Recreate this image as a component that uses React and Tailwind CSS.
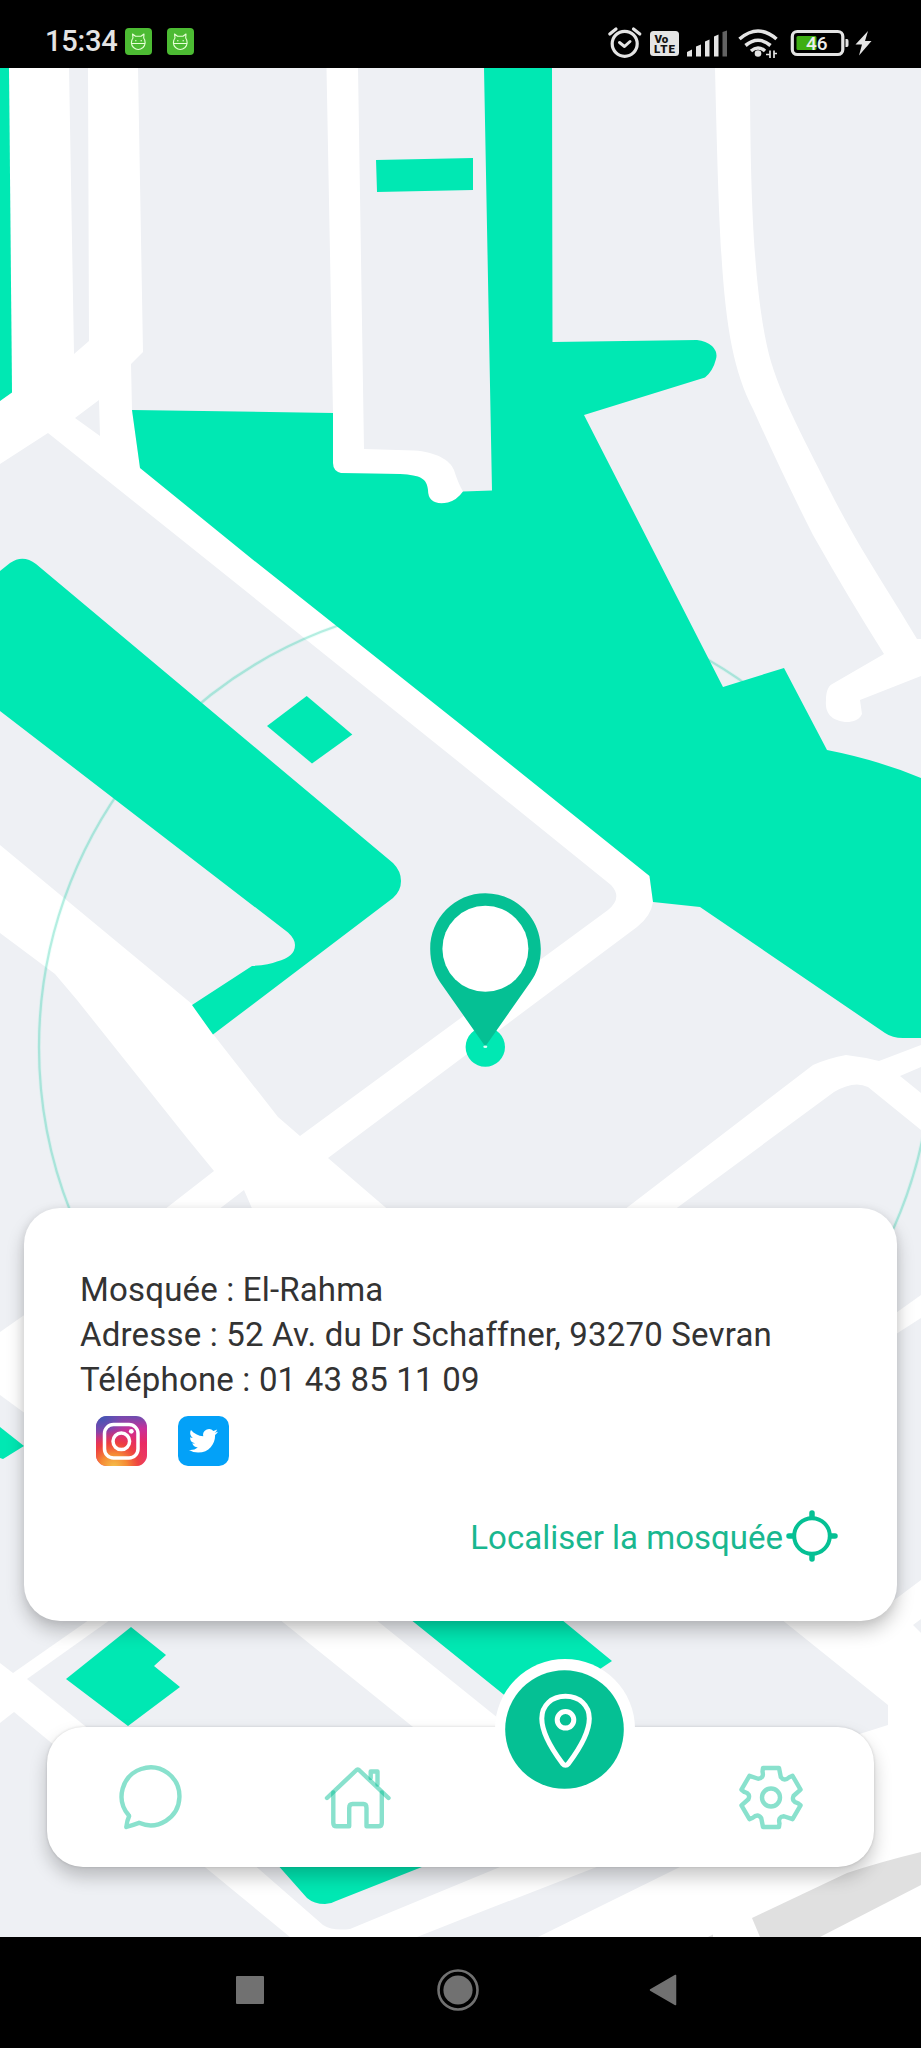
import React from "react";

const GREEN = "#00e8b3";
const DEEP = "#05c094";

function CityMap() {
  return (
    <svg className="absolute inset-0 h-full w-full" viewBox="0 68 921 1869" preserveAspectRatio="none">
      <rect x="0" y="68" width="921" height="1869" fill="#eef0f4" />

      {/* roads */}
      <g fill="#fff">
        <path d="M9 68H69L74 354L89 341L88 68H138L143 352L131 364L132 410L140 468L649 874L653 902Q651 916 637 927L328 1158L392 1213H254L244 1190L214 1213H160L214 1171L187 1138L77 1000L55 974L0 933V845L192 1004L213 1034L278 1117L300 1136L608 910Q623 898 611 885L460 763L182 540L48 433L0 464V401L12 392ZM75 418L100 436L99 400Z" />
        <path d="M326.500 68H358L364 449L414 450.500C436 452 450 460 454 470Q458 483 463 491.500Q457 500 448 502.500Q428 506 428 490C427 479 421 475 400 474L341 473Q333 471 333 463V413Z" />
        <path d="M715 68H750C750 210 755 290 767 346C776 388 801 433 830 491C860 550 885 585 917 639H921V676L860 700L862 714C858 722 850 722 845 722C829 720 825 711 826 700C826 690 829 685 834 683L884 654Q848 597 813 535Q785 480 753 409C723 350 720 280 715 68Z" />
        <path d="M620 1213L813 1065Q829 1058 846 1055Q863 1057 879 1061L921 1045V1067L900 1076L921 1093V1130L868 1087Q854 1080 834 1092L670 1213Z" />
        <path d="M0 1332L30 1311V1417L0 1395Z" />
        <path d="M893 1315L921 1295V1318L893 1336Z" />
        <path d="M0 1663L13 1673L96 1615H117L27 1679L90 1730L60 1750L14 1712L0 1723Z" />
        <path d="M274 1615H370L514 1731H418Z" />
        <path d="M776 1615L888 1705V1725L850 1737L840 1780L680 1867L538 1937H921V1633L913 1625L921 1619V1580L873 1616Z" />
        <path d="M200 1863H252L323 1925Q332 1931 350 1929L500 1867L510 1863H607L460 1920L417 1937H290Z" />
      </g>

      {/* range circle */}
      <circle cx="485.500" cy="1047" r="446.500" fill="none" stroke={DEEP} strokeOpacity=".25" strokeWidth="2.200" />
      <circle cx="485.500" cy="1047" r="446.500" fill="none" stroke={GREEN} strokeOpacity=".06" strokeWidth="4" />

      {/* parks */}
      <g fill={GREEN}>
        <path d="M0 68H9L12 392.500L0 401Z" />
        <path d="M376 160L473 158V190L377 192Z" />
        <path d="M484 68H552L552.500 342L697 340Q706 341 712 346Q718 352 716 359Q713 371 705 377.500L584 415L723 687L784 668L827 750Q878 760 921 778V1038H905Q893 1038.500 885 1033L700 907L653 902L649.500 876L460 724L252 559L140 468L132 410L333 413V463Q333 471 341 473L400 474C421 475 427 479 428 490Q428 506 448 502.500Q457 500 463 491.500L492 490.500Z" />
        <path d="M0 571L10 563Q23 554 36 564L393 863Q401 871 401 881Q401 891 393 898L213 1034.500L192 1005L252 966Q269 965 277 961.500Q295 957 295 945Q295 939 288 932.500L0 711Z" />
        <path d="M306.700 696L352.300 734.600L312 763.500L267 726Z" />
        <path d="M0 1427L24 1446L3 1459L0 1458Z" />
        <path d="M131 1627L166 1655L154 1666L180 1687L128 1726L66 1679Z" />
        <path d="M405 1615H556L612 1661L600 1669L540 1723L503 1694Z" />
        <path d="M276 1863L307 1898Q314 1904 325 1904Q331 1904 336 1901L432 1863Z" />
      </g>
      <path d="M752 1918L847 1873Q880 1862 921 1852V1885L820 1937H760Z" fill="#e0e0e0" />
      <path d="M708 1937L713 1934.500V1937Z" fill="#e0e0e0" />

      {/* position */}
      <circle cx="485.300" cy="1047" r="19.700" fill={GREEN} />
      <path d="M485.300 893.300C455 893.300 430.200 918 430.200 949C430.200 962 434 973 440 982L485.300 1046.500L530.500 982C537 973 540.800 962 540.800 949C540.800 918 516 893.300 485.300 893.300Z" fill={DEEP} />
      <circle cx="485.400" cy="948.800" r="43" fill="#fff" />
      <ellipse cx="485.300" cy="1046.700" rx="2" ry="1.300" fill="#d9fff5" />
    </svg>
  );
}

function Cat() {
  return (
    <svg className="h-[27px] w-[27px]" viewBox="0 0 27 27">
      <rect width="27" height="27" rx="4" fill="#4cbb33" />
      <g fill="none" stroke="#e8ffd8" strokeWidth="1.100" strokeLinejoin="round">
        <path d="M7.500 6L8 10C5.500 13 6 17 8.500 19.500Q13.300 23.500 18 19.500C20.500 17 21 13 18.700 10L19 6L16 8.300H10.500Z" />
        <path d="M6.500 15.500H20M10 12.700H11.500M15.500 12.700H17" />
      </g>
    </svg>
  );
}

function StatusBar() {
  return (
    <header className="flex h-[68px] shrink-0 items-center bg-black pl-[45px] pt-[15px]">
      <span className="w-[80px] text-[29px] font-medium leading-none tracking-[-0.2px] text-[#e4e4e4]">15:34</span>
      <div className="flex gap-[15px]">
        <Cat />
        <Cat />
      </div>
      <svg className="ml-auto mr-[41px] h-[40px] w-[276px]" viewBox="604 21 276 40">
        <g fill="none" stroke="#e4e4e4" strokeLinecap="round">
          <circle cx="624.700" cy="42.800" r="12.500" strokeWidth="3.200" />
          <path d="M619.500 41.500L624.500 45.500L630 40.500" strokeWidth="3" strokeLinejoin="round" />
          <path d="M609.800 33L616 28M639.800 33L633.500 28" strokeWidth="3.200" />
        </g>
        <rect x="650" y="30" width="29" height="25" rx="3.500" fill="#e4e4e4" />
        <text x="654.500" y="41.500" fontSize="11.500" fontWeight="900" fill="#111" fontFamily="Roboto, sans-serif">Vo</text>
        <text x="654" y="52" fontSize="11.500" fontWeight="900" fill="#111" fontFamily="Roboto, sans-serif" textLength="21">LTE</text>
        <g fill="#e4e4e4">
          <path d="M687 55.500V51L692 48.500V55.500ZM696 55.500V45.500L701 43.500V55.500ZM705 55.500V40.500L709.500 38.500V55.500ZM714 55.500V35.500L718.500 33.500V55.500Z" />
          <path d="M722.500 55.500V31L727 29.500V55.500Z" fill="#626262" />
        </g>
        <g fill="none" stroke="#e4e4e4" strokeWidth="3.600">
          <path d="M739.500 38Q758 22 776.500 38" />
          <path d="M745.500 44.500Q758 34 770.500 44.500" />
          <path d="M751 50Q758 44 765 50" />
        </g>
        <circle cx="758" cy="52.500" r="3.300" fill="#e4e4e4" />
        <path d="M766 53.500H770M770 49.500V57M774 49.500V57M774 52.500H777" fill="none" stroke="#e4e4e4" strokeWidth="1.700" />
        <rect x="792.300" y="30.500" width="50.500" height="23" rx="5" fill="none" stroke="#e4e4e4" strokeWidth="3.200" />
        <rect x="796.500" y="35" width="20" height="14" rx="1.500" fill="#3fae14" />
        <path d="M845.500 38H847Q848.500 38 848.500 40V44Q848.500 46 847 46H845.500Z" fill="#e4e4e4" />
        <text x="806" y="49" fontSize="19" fontWeight="500" fill="#eee" fontFamily="Roboto, sans-serif">46</text>
        <path d="M868 30L855.500 43.500H862L859 54.500L871.500 40H865Z" fill="#e4e4e4" />
      </svg>
    </header>
  );
}

function Instagram() {
  return (
    <svg className="h-[51px] w-[51px]" viewBox="0 0 51 51">
      <defs>
        <linearGradient id="igBase" x1="0" y1="0" x2="0" y2="1">
          <stop offset="0" stopColor="#6a4fb0" />
          <stop offset=".25" stopColor="#c8309a" />
          <stop offset=".55" stopColor="#ea2a62" />
          <stop offset="1" stopColor="#f0406a" />
        </linearGradient>
        <radialGradient id="igWarm" cx=".35" cy="1.020" r=".75">
          <stop offset="0" stopColor="#f5c04a" />
          <stop offset=".35" stopColor="#f58a35" />
          <stop offset=".65" stopColor="#ee4438" stopOpacity=".8" />
          <stop offset="1" stopColor="#e0306a" stopOpacity="0" />
        </radialGradient>
        <radialGradient id="igCool" cx=".1" cy="0" r=".6">
          <stop offset="0" stopColor="#3d57b5" />
          <stop offset=".5" stopColor="#6a4db2" stopOpacity=".8" />
          <stop offset="1" stopColor="#a03aa8" stopOpacity="0" />
        </radialGradient>
      </defs>
      <rect width="51" height="50" rx="11" fill="url(#igBase)" />
      <rect width="51" height="50" rx="11" fill="url(#igCool)" />
      <rect width="51" height="50" rx="11" fill="url(#igWarm)" />
      <rect x="8.500" y="8.500" width="33.500" height="33.500" rx="9" fill="none" stroke="#fff" strokeWidth="3.500" />
      <circle cx="25.300" cy="25.300" r="8.300" fill="none" stroke="#fff" strokeWidth="3.500" />
      <circle cx="35.300" cy="15.300" r="2.400" fill="#fff" />
    </svg>
  );
}

function Twitter() {
  return (
    <svg className="h-[51px] w-[51px]" viewBox="0 0 51 51">
      <rect width="51" height="50" rx="10" fill="#03a1f8" />
      <g transform="translate(11 10.300) scale(1.210)">
        <path fill="#fff" d="M23.950 4.570a10 10 0 01-2.820.770 4.960 4.960 0 002.160-2.720c-.950.550-2 .950-3.130 1.180a4.920 4.920 0 00-8.380 4.480C7.690 8.090 4.070 6.130 1.640 3.160a4.820 4.820 0 00-.670 2.480c0 1.710.870 3.210 2.190 4.100a4.900 4.900 0 01-2.230-.610v.060a4.920 4.920 0 003.950 4.830 5 5 0 01-2.210.080 4.940 4.940 0 004.600 3.420A9.870 9.870 0 010 19.540a13.990 13.990 0 007.560 2.210c9.050 0 14-7.500 14-13.980 0-.210 0-.420-.020-.630a9.940 9.940 0 002.460-2.550z" />
      </g>
    </svg>
  );
}

function PlaceCard() {
  return (
    <section className="mx-[24px] mt-[1140px] flex h-[413px] shrink-0 flex-col rounded-[36px] bg-white pl-[56px] pr-[59px] pt-[59px] shadow-[0_10px_18px_rgba(0,0,0,0.22),0_1px_8px_rgba(0,0,0,0.08)]">
      <div className="text-[33px] leading-[45.200px] tracking-[0.180px] text-[#333]">
        <p className="whitespace-nowrap">Mosquée : El-Rahma</p>
        <p className="whitespace-nowrap">Adresse : 52 Av. du Dr Schaffner, 93270 Sevran</p>
        <p className="whitespace-nowrap">Téléphone : 01 43 85 11 09</p>
      </div>
      <div className="mt-[13px] flex gap-[31px] pl-[16px]">
        <Instagram />
        <Twitter />
      </div>
      <button className="mt-[42px] flex items-center self-end text-[33px] leading-[52px] text-[#19b78f]">
        <span className="whitespace-nowrap pt-[3px]">Localiser la mosquée</span>
        <svg className="ml-[3px] h-[52px] w-[52px]" viewBox="-26 -26 52 52" fill="none" stroke={DEEP} strokeLinecap="round">
          <circle r="17.800" strokeWidth="4" />
          <path d="M0-23V-19M0 19V23M-23 0H-19M19 0H23" strokeWidth="5.500" />
        </svg>
      </button>
    </section>
  );
}

function gearPath() {
  const tooth = [[-8, -29.5], [8, -29.5], [9.8, -20.5], [13.3, -15.5], [18.2, -20.3]];
  let d = "";
  for (let i = 0; i < 6; i++) {
    const a = (i * Math.PI) / 3;
    const p = tooth.map(([x, y]) =>
      `${(x * Math.cos(a) - y * Math.sin(a)).toFixed(2)} ${(x * Math.sin(a) + y * Math.cos(a)).toFixed(2)}`
    );
    d += `${i ? "L" : "M"}${p[0]}L${p[1]}L${p[2]}Q${p[3]} ${p[4]}`;
  }
  return d + "Z";
}

const iconProps = { fill: "none", stroke: DEEP, strokeWidth: 4.4, strokeLinecap: "round", strokeLinejoin: "round" };

function NavBar() {
  return (
    <nav className="relative mx-[47px] mt-[106px] grid h-[140px] shrink-0 grid-cols-[208px_206px_206px_207px] items-center rounded-[36px] bg-white shadow-[0_10px_18px_rgba(0,0,0,0.22),0_0_3px_rgba(0,0,0,0.15)]">
      <button className="flex justify-center">
        <svg className="h-[70px] w-[70px]" viewBox="115 1761.500 70 70" {...iconProps} strokeOpacity=".47">
          <path d="M127.500 1814.500A28.900 28.900 0 1 1 138 1822.300Q133 1824 125.300 1826.500Q126 1820 128 1816Q128.300 1815.200 127.500 1814.500Z" />
        </svg>
      </button>
      <button className="flex justify-center">
        <svg className="h-[70px] w-[70px]" viewBox="323.500 1762 70 70" {...iconProps} strokeOpacity=".47">
          <path d="M327.500 1798L356.500 1770.500Q358.300 1768.500 360 1770.500L389 1798" />
          <path d="M333.800 1792.500V1823Q333.800 1826.300 337 1826.300H349.700V1808Q349.700 1804 353 1804H364Q367 1804 367 1808V1826.300H379Q382.300 1826.300 382.300 1823V1792.500" />
          <path d="M371.200 1778V1771.500H378V1784.500" />
        </svg>
      </button>
      <span />
      <button className="flex justify-center">
        <svg className="h-[70px] w-[70px]" viewBox="-35 -35.500 70 70" {...iconProps} strokeOpacity=".47">
          <path d={gearPath()} />
          <circle r="9" />
        </svg>
      </button>
      <button className="absolute left-[448px] top-[-68px] flex h-[140px] w-[140px] items-center justify-center rounded-full bg-white">
        <svg className="-ml-[2px] h-[119px] w-[119px]" viewBox="504.500 1669.500 119 119">
          <circle cx="564" cy="1729" r="59.300" fill={DEEP} />
          <g fill="none" stroke="#fff" strokeWidth="5">
            <path d="M565 1695.800C551 1695.800 541.300 1705 541.300 1718C541.300 1734 553 1751 562 1763Q565 1766.500 568 1763C577 1751 588.800 1734 588.800 1718C588.800 1705 579 1695.800 565 1695.800Z" />
            <circle cx="565" cy="1719.300" r="8.300" />
          </g>
        </svg>
      </button>
    </nav>
  );
}

function SystemNav() {
  return (
    <footer className="flex h-[111px] shrink-0 items-center bg-black pb-[5px]">
      <div className="ml-[236px] h-[28px] w-[28px] rounded-[1px] bg-[#717171]" />
      <svg className="ml-[173px] h-[42px] w-[42px]" viewBox="-21 -21 42 42">
        <circle r="19.500" fill="none" stroke="#717171" strokeWidth="2.600" />
        <circle r="14.600" fill="#717171" />
      </svg>
      <svg className="ml-[170px] h-[32px] w-[28px]" viewBox="0 0 28 32">
        <path d="M1.500 16L26.500 1.500V30.500Z" fill="#717171" stroke="#717171" strokeWidth="1.500" strokeLinejoin="round" />
      </svg>
    </footer>
  );
}

export default function App() {
  return (
    <div className="flex h-[2048px] w-[921px] flex-col overflow-hidden font-[Roboto,sans-serif]">
      <StatusBar />
      <main className="relative flex h-[1869px] shrink-0 flex-col overflow-hidden">
        <CityMap />
        <div className="relative flex flex-col">
          <PlaceCard />
          <NavBar />
        </div>
      </main>
      <SystemNav />
    </div>
  );
}
